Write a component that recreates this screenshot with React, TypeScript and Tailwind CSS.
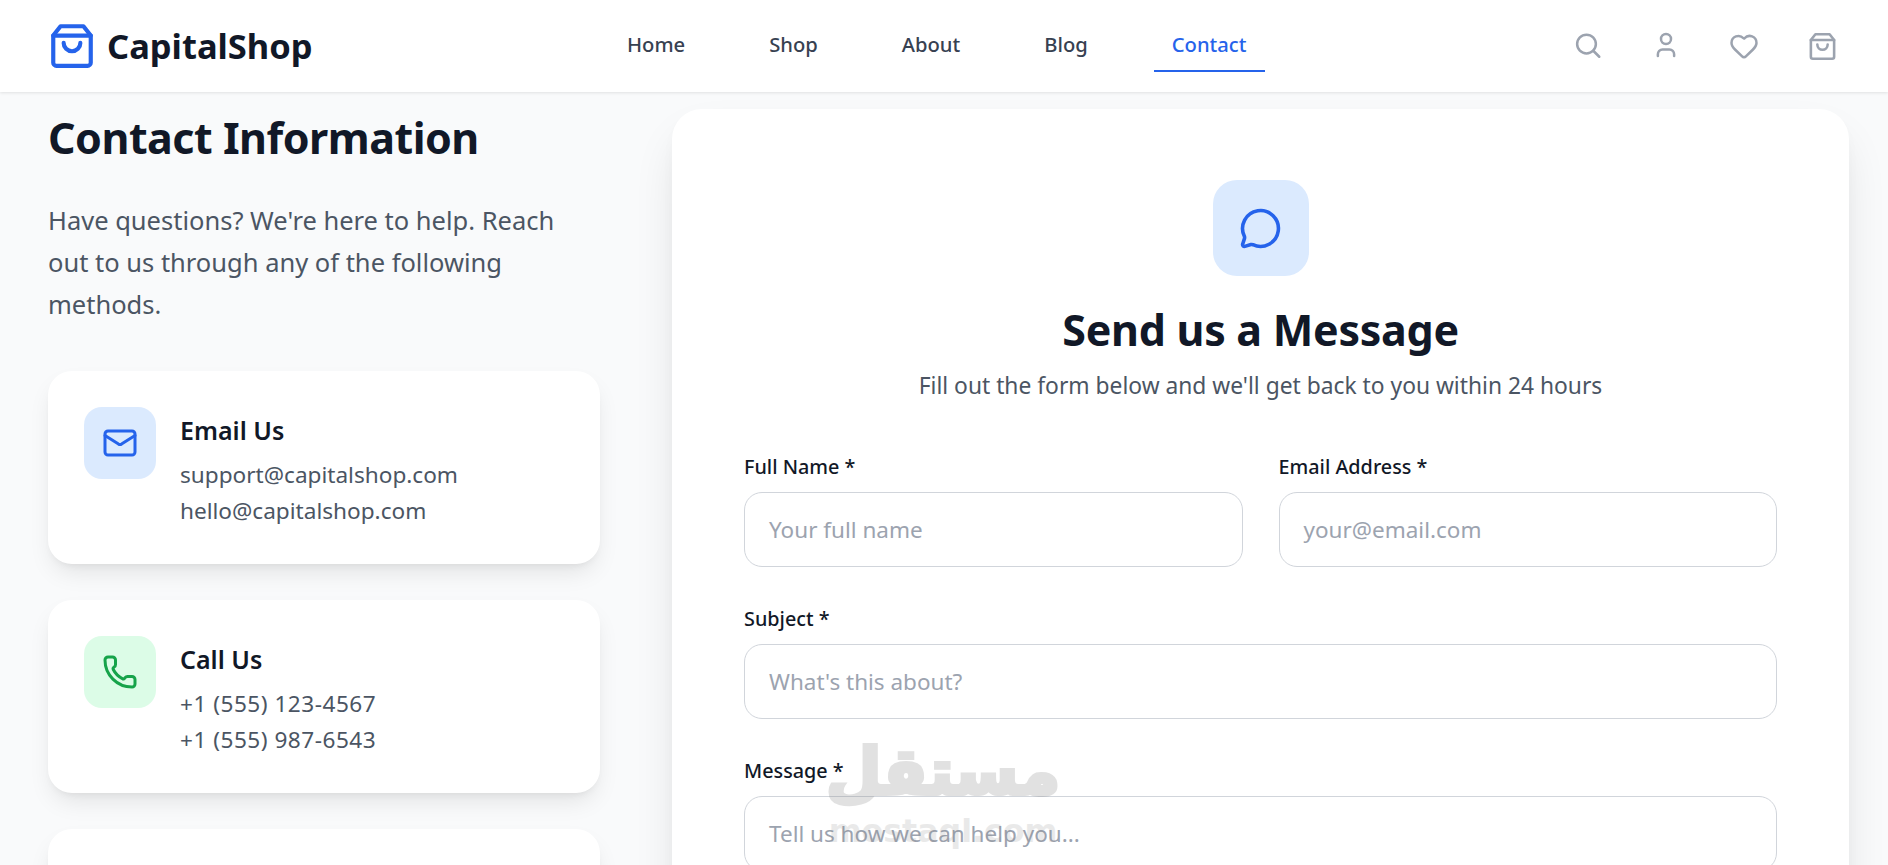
import { Heart, Mail, MessageCircle, Phone } from "lucide-react";

const Bag = ({ className }: { className: string }) => (
  <svg viewBox="0 0 24 24" fill="none" stroke="currentColor" strokeWidth="2" strokeLinecap="round" strokeLinejoin="round" className={className}>
    <path d="M6.5 2.5h11L21 7v13a1.5 1.5 0 0 1-1.5 1.5h-15A1.5 1.5 0 0 1 3 20V7z" />
    <path d="M3 7h18" />
    <path d="M8 10.5a4 4 0 0 0 8 0" />
  </svg>
);

const User = ({ className }: { className: string }) => (
  <svg viewBox="0 0 24 24" fill="none" stroke="currentColor" strokeWidth="2" strokeLinecap="round" strokeLinejoin="round" className={className}>
    <circle cx="12" cy="6.4" r="4" />
    <path d="M5.5 20v-1.5a3.7 3.7 0 0 1 3.7-3.7h5.6a3.7 3.7 0 0 1 3.7 3.7V20" />
  </svg>
);

const SearchIcon = ({ className }: { className: string }) => (
  <svg viewBox="0 0 24 24" fill="none" stroke="currentColor" strokeWidth="2" strokeLinecap="round" strokeLinejoin="round" className={className}>
    <circle cx="10.8" cy="10.4" r="7.5" />
    <path d="M16.2 15.8l4.8 4.8" />
  </svg>
);

const nav = ["Home", "Shop", "About", "Blog", "Contact"];

const Field = ({ label, placeholder }: { label: string; placeholder: string }) => (
  <div>
    <label className="block mb-[11px] text-[19.8px] leading-[29px] font-medium text-[#111827]">{label}</label>
    <div className="h-[75px] px-[24px] flex items-center rounded-[18px] border border-[#d1d5db] bg-white text-[22.5px] text-[#9ca3af]">
      {placeholder}
    </div>
  </div>
);

const InfoCard = ({ icon, title, lines, lineClass }: { icon: React.ReactNode; title: string; lines: string[]; lineClass?: string }) => (
  <div className="flex gap-[24px] rounded-[24px] bg-white pl-[36px] pr-[36px] pt-[36px] pb-[35px] shadow-[0_12px_24px_-5px_rgba(0,0,0,0.1),0_5px_10px_-6px_rgba(0,0,0,0.1)]">
    {icon}
    <div className="pt-[5px]">
      <h3 className="text-[25px] leading-[36px] font-semibold text-[#111827] mb-[9px]">{title}</h3>
      {lines.map((l) => (
        <p key={l} className={`text-[22.6px] leading-[36px] text-[#4b5563] ${lineClass ?? ""}`}>{l}</p>
      ))}
    </div>
  </div>
);

export default function App() {
  return (
    <div className="relative h-screen overflow-hidden bg-[#f9fafb] font-['Noto_Sans',sans-serif]">
      <header className="h-[92px] bg-white shadow-[0_1px_3px_rgba(0,0,0,0.1)] flex items-center pl-[48px] pr-[51px] relative z-10">
        <div className="flex items-center gap-[10px] w-[561px] shrink-0">
          <Bag className="w-[50px] h-[50px] text-[#2563eb] -ml-[1px]" />
          <span className="text-[34.5px] font-bold text-[#111827]">CapitalShop</span>
        </div>
        <nav className="flex items-center gap-[48px]">
          {nav.map((n) => (
            <a key={n} className={`relative h-[52px] pb-[3px] px-[18px] flex items-center text-[20.2px] font-medium ${n === "Contact" ? "text-[#2563eb]" : "text-[#374151]"}`}>
              {n}
              {n === "Contact" && <span className="absolute left-0 right-0 bottom-0 h-[2.4px] bg-[#2563eb]" />}
            </a>
          ))}
        </nav>
        <div className="ml-auto flex items-center gap-[48px] text-[#9ca3af]">
          <div className="w-[30px] flex justify-center"><SearchIcon className="w-[30px] h-[30px] shrink-0" /></div>
          <div className="w-[30px] flex justify-center"><User className="w-[30px] h-[30px] shrink-0" /></div>
          <div className="w-[30px] flex justify-center"><Heart className="w-[30px] h-[30px] shrink-0" /></div>
          <div className="w-[30px] flex justify-center"><Bag className="w-[31px] h-[31px] shrink-0" /></div>
        </div>
      </header>
      <main className="flex gap-[72px] pl-[48px] pr-[39px] pt-[17px]">
        <section className="w-[552px] shrink-0">
          <h2 className="text-[43px] leading-[58px] font-bold tracking-[-0.5px] text-[#111827] mb-[32px]">Contact Information</h2>
          <p className="max-w-[520px] text-[25.5px] leading-[42px] text-[#4b5563] mb-[46px]">
            Have questions? We're here to help. Reach out to us through any of the following methods.
          </p>
          <div className="flex flex-col gap-[36px]">
            <InfoCard
              icon={<div className="w-[72px] h-[72px] shrink-0 rounded-[18px] bg-[#dbeafe] flex items-center justify-center text-[#2563eb]"><Mail className="w-[36px] h-[36px]" /></div>}
              title="Email Us"
              lines={["support@capitalshop.com", "hello@capitalshop.com"]}
            />
            <InfoCard
              icon={<div className="w-[72px] h-[72px] shrink-0 rounded-[18px] bg-[#dcfce7] flex items-center justify-center text-[#16a34a]"><Phone className="w-[36px] h-[36px]" /></div>}
              title="Call Us"
              lines={["+1 (555) 123-4567", "+1 (555) 987-6543"]}
              lineClass="tracking-[0.5px]"
            />
            <div className="flex rounded-[24px] bg-white p-[36px] shadow-[0_12px_24px_-5px_rgba(0,0,0,0.1),0_5px_10px_-6px_rgba(0,0,0,0.1)]">
              <div className="w-[72px] h-[72px] shrink-0 rounded-[18px] bg-[#e0e7ff]" />
            </div>
          </div>
        </section>
        <section className="flex-1 rounded-[30px] bg-white px-[72px] pt-[71px] pb-[72px] shadow-[0_24px_50px_-12px_rgba(0,0,0,0.14),0_8px_20px_-8px_rgba(0,0,0,0.06)]">
          <div className="flex flex-col items-center">
            <div className="w-[96px] h-[96px] rounded-[24px] bg-[#dbeafe] flex items-center justify-center text-[#2563eb] mb-[25px]">
              <MessageCircle className="w-[43px] h-[43px]" />
            </div>
            <h2 className="text-[43px] leading-[58px] font-bold tracking-[-0.28px] text-[#111827] mb-[9px]">Send us a Message</h2>
            <p className="text-[22.8px] leading-[36px] text-[#4b5563] mb-[48px]">Fill out the form below and we'll get back to you within 24 hours</p>
          </div>
          <div className="grid grid-cols-2 gap-x-[36px] gap-y-[37px]">
            <Field label="Full Name *" placeholder="Your full name" />
            <Field label="Email Address *" placeholder="your@email.com" />
            <div className="col-span-2"><Field label="Subject *" placeholder="What's this about?" /></div>
            <div className="col-span-2"><Field label="Message *" placeholder="Tell us how we can help you..." /></div>
          </div>
        </section>
      </main>
      <div className="absolute left-[830px] top-[732px] w-[226px] flex flex-col items-center text-[#8a8a8a] opacity-25 font-['DejaVu_Sans',sans-serif] pointer-events-none">
        <span className="text-[64px] leading-[80px] font-bold [-webkit-text-stroke:4px_#8a8a8a]">مستقل</span>
        <span className="text-[31.6px] leading-[38px] font-bold opacity-70">mostaql.com</span>
      </div>
    </div>
  );
}
